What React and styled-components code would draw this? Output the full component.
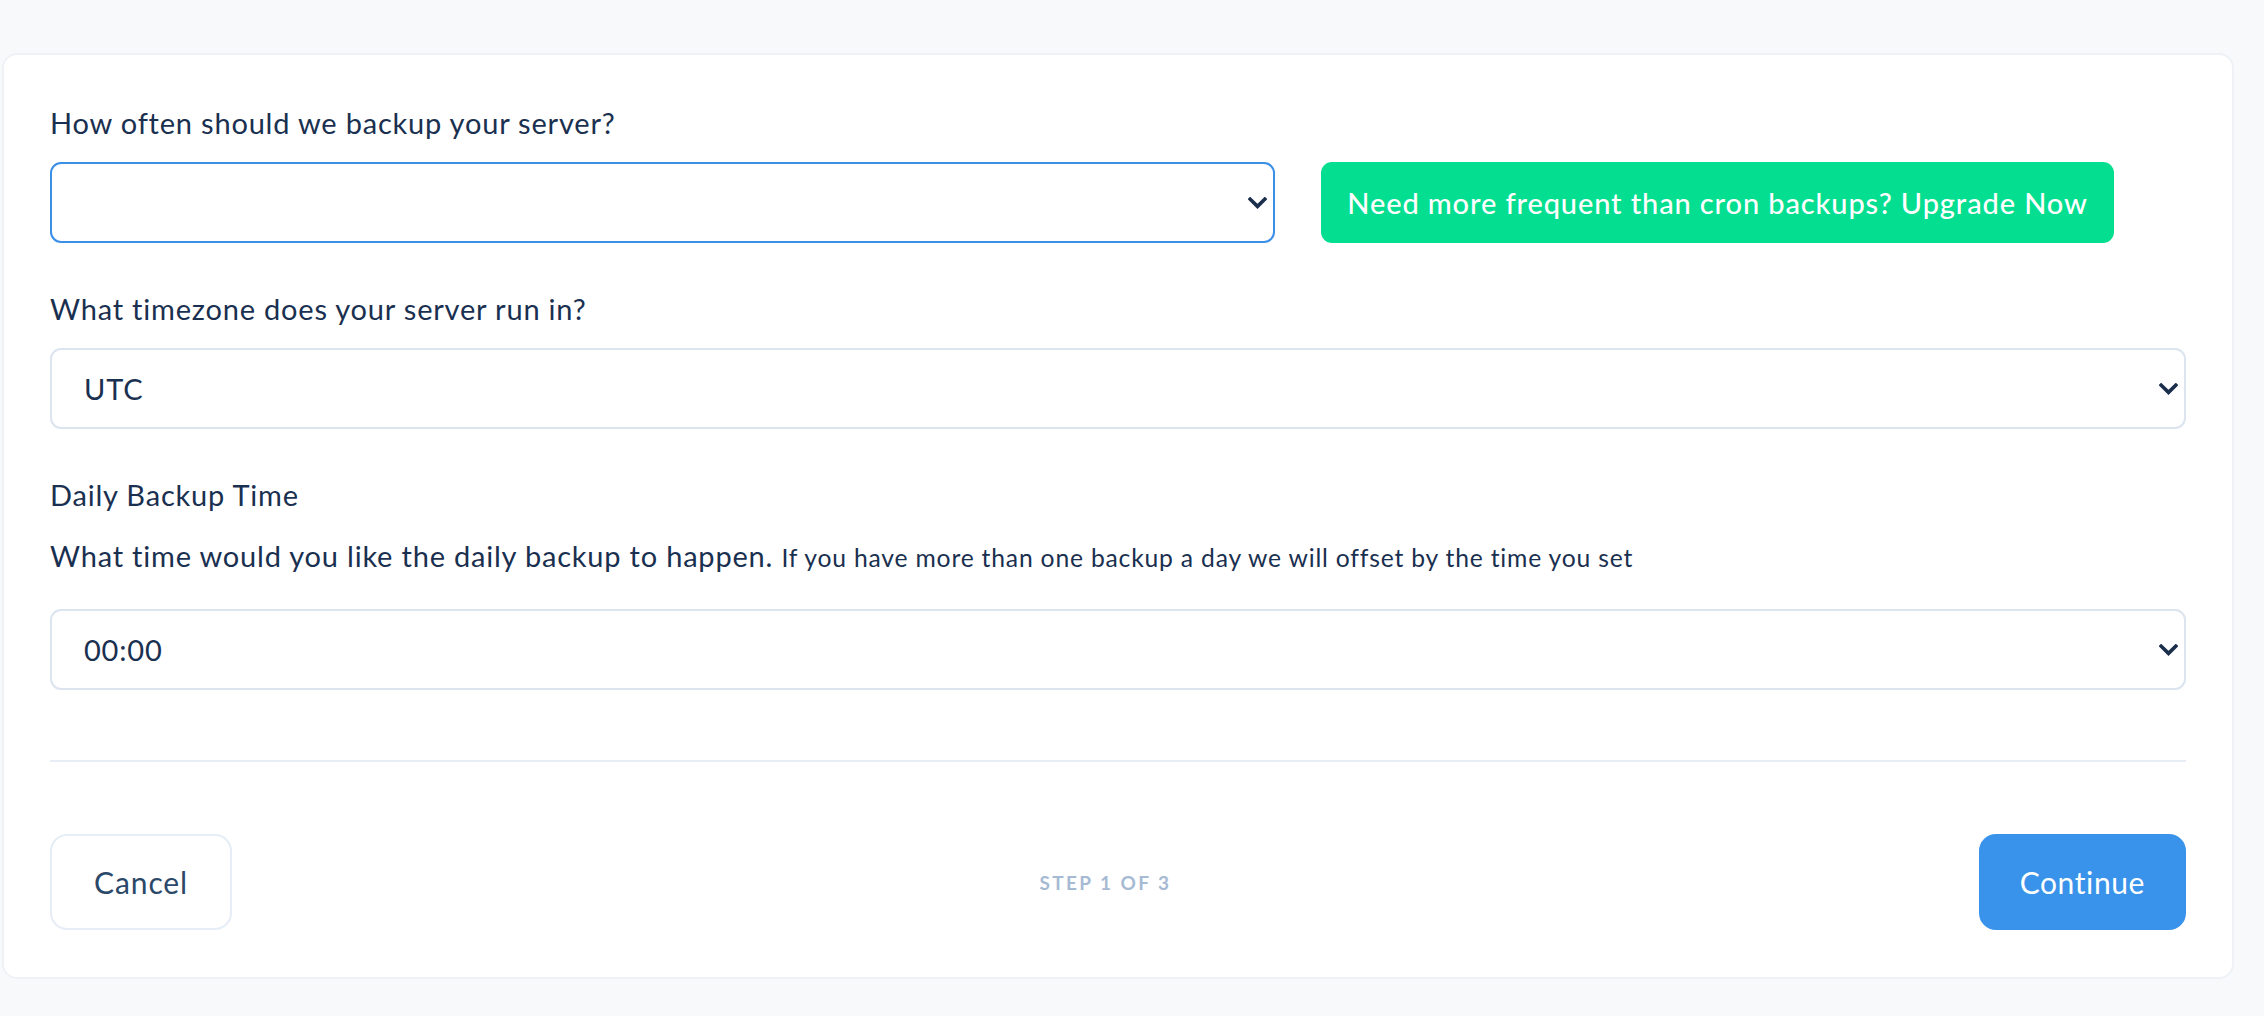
import React from "react";
import styled, { createGlobalStyle } from "styled-components";

const Global = createGlobalStyle`
  html, body { margin: 0; padding: 0; background: #f7f9fb; }
  body { font-family: Lato, "Noto Sans", sans-serif; color: #1a3050; }
  * { box-sizing: border-box; }
`;

const Page = styled.div`
  padding: 53px 30px 38px 2px;
  min-height: 1016px;
`;

const Card = styled.div`
  background: #ffffff;
  border: 2px solid #eef2f7;
  border-radius: 15px;
  padding: 47px 46px 47px 46px;
  display: flex;
  flex-direction: column;
`;

const Label = styled.div`
  font-size: 29px;
  letter-spacing: 0.8px;
  line-height: 42px;
  color: #1a3050;
  margin-bottom: ${(p) => p.$mb || 18}px;
`;

const Small = styled.span`
  font-size: 24.7px;
  letter-spacing: 0.8px;
`;

const Row = styled.div`
  display: flex;
  align-items: stretch;
  gap: 46px;
  margin-bottom: 45px;
`;

const SelectWrap = styled.div`
  position: relative;
  flex: 0 0 auto;
  width: ${(p) => p.$width || "auto"};
  margin-bottom: ${(p) => p.$mb || 0}px;
`;

const Select = styled.select`
  appearance: none;
  -webkit-appearance: none;
  width: 100%;
  height: 81px;
  padding: 0 60px 0 32px;
  font-family: Lato, "Noto Sans", sans-serif;
  font-size: 29px;
  letter-spacing: 0.8px;
  color: #1a3050;
  background: #ffffff;
  border: 2px solid ${(p) => (p.$focus ? "#3b8fe6" : "#dbe4ef")};
  border-radius: 11px;
  outline: none;
`;

const Chevron = styled.svg`
  position: absolute;
  right: 8px;
  top: 50%;
  transform: translateY(-50%);
  width: 19px;
  height: 12px;
  pointer-events: none;
`;

const Upgrade = styled.button`
  flex: 0 0 auto;
  width: 793px;
  height: 81px;
  border: none;
  border-radius: 11px;
  background: #03de90;
  color: #ffffff;
  font-family: Lato, "Noto Sans", sans-serif;
  font-size: 29px;
  letter-spacing: 0.88px;
  font-weight: 500;
  cursor: pointer;
`;

const Divider = styled.hr`
  border: none;
  height: 2px;
  background: #e8eef6;
  margin: 70px 0 72px 0;
`;

const Footer = styled.div`
  display: flex;
  justify-content: space-between;
  align-items: center;
`;

const Button = styled.button`
  height: 96px;
  padding: 0 ${(p) => (p.$primary ? 39 : 42)}px;
  border-radius: 17px;
  font-family: Lato, "Noto Sans", sans-serif;
  font-size: 30px;
  letter-spacing: ${(p) => (p.$primary ? 0.6 : 0.9)}px;
  cursor: pointer;
  background: ${(p) => (p.$primary ? "#3a93ea" : "#ffffff")};
  color: ${(p) => (p.$primary ? "#ffffff" : "#2b4868")};
  border: 2px solid ${(p) => (p.$primary ? "#3a93ea" : "#e6edf7")};
`;

const Step = styled.div`
  font-size: 19px;
  font-weight: 700;
  letter-spacing: 2.4px;
  color: #a6bad3;
  text-transform: uppercase;
`;

const ChevronIcon = () => (
  <Chevron viewBox="0 0 19 12">
    <path d="M2.2 2.2 L9.5 9.4 L16.8 2.2" fill="none" stroke="#1b2e4b" strokeWidth="3.6" strokeLinecap="square" />
  </Chevron>
);

export default function App() {
  return (
    <>
      <Global />
      <Page>
        <Card>
          <Label>How often should we backup your server?</Label>
          <Row>
            <SelectWrap $width="1225px">
              <Select $focus defaultValue="">
                <option value=""></option>
              </Select>
              <ChevronIcon />
            </SelectWrap>
            <Upgrade>Need more frequent than cron backups? Upgrade Now</Upgrade>
          </Row>

          <Label>What timezone does your server run in?</Label>
          <SelectWrap $mb={45}>
            <Select defaultValue="UTC">
              <option value="UTC">UTC</option>
            </Select>
            <ChevronIcon />
          </SelectWrap>

          <Label $mb={19}>Daily Backup Time</Label>
          <Label $mb={30}>
            What time would you like the daily backup to happen.{" "}
            <Small>If you have more than one backup a day we will offset by the time you set</Small>
          </Label>
          <SelectWrap>
            <Select defaultValue="00:00">
              <option value="00:00">00:00</option>
            </Select>
            <ChevronIcon />
          </SelectWrap>

          <Divider />

          <Footer>
            <Button>Cancel</Button>
            <Step>Step 1 of 3</Step>
            <Button $primary>Continue</Button>
          </Footer>
        </Card>
      </Page>
    </>
  );
}
